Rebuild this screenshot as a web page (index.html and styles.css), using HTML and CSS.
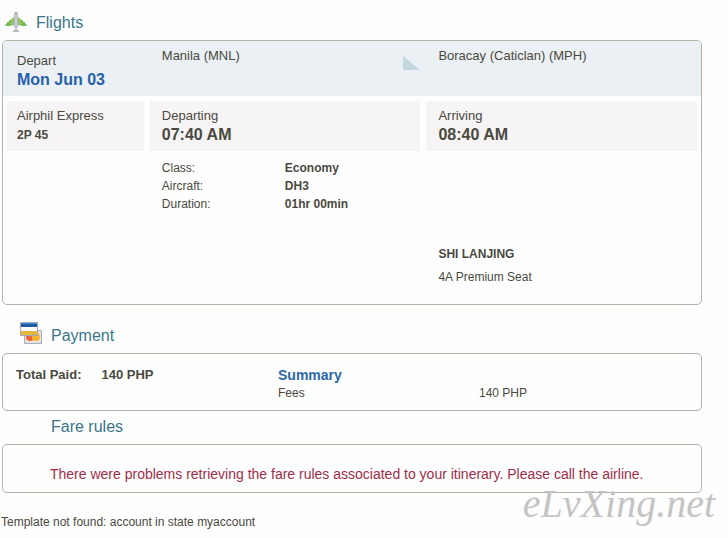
FILE: index.html
```html
<!DOCTYPE html>
<html lang="en">
<head>
<meta charset="utf-8">
<title>Itinerary</title>
<link rel="stylesheet" href="styles.css">
</head>
<body>
<main class="page">
  <section class="flights">
    <h2 class="heading heading-flights">
      <svg class="icon-plane" width="22" height="22" viewBox="0 0 22 22" aria-hidden="true">
        <path d="M9 5 5 8 2 11 0 14h5l4-1zM13 5l4 3 3 3 2 3h-5l-4-1z" fill="#8cc665"/>
        <path d="M0 14l3-4 2 3zM22 14l-3-4-2 3z" fill="#6cb04f"/>
        <path d="M5 8v3M17 8v3" stroke="#66a850"/>
        <path d="M9 3q0-3 2-3t2 3v11l-1 3 2 2v1H8v-1l2-2-1-3z" fill="#b5b8bd"/>
        <path d="M11 2v16" stroke="#dfe1e4"/>
        <path d="M10 1h2" stroke="#868b91"/>
      </svg>
      <span>Flights</span>
    </h2>
    <div class="panel">
      <div class="columns route">
        <div class="cell depart">
          <div>Depart</div>
          <strong class="date">Mon Jun 03</strong>
        </div>
        <div class="cell origin">
          <span>Manila (MNL)</span>
          <svg class="arrow" width="17" height="14" viewBox="0 0 17 14" aria-hidden="true"><path d="M0 0v14h17z" fill="#c5d7de"/></svg>
        </div>
        <div class="cell">Boracay (Caticlan) (MPH)</div>
      </div>
      <div class="columns times">
        <div class="cell"><div>Airphil Express</div><strong class="number">2P 45</strong></div>
        <div class="cell"><div>Departing</div><strong class="time">07:40 AM</strong></div>
        <div class="cell"><div>Arriving</div><strong class="time">08:40 AM</strong></div>
      </div>
      <div class="columns details">
        <dl class="specs">
          <dt>Class:</dt><dd>Economy</dd>
          <dt>Aircraft:</dt><dd>DH3</dd>
          <dt>Duration:</dt><dd>01hr 00min</dd>
        </dl>
        <div class="passenger">
          <strong>SHI LANJING</strong>
          <span>4A Premium Seat</span>
        </div>
      </div>
    </div>
  </section>

  <section>
    <h2 class="heading heading-payment">
      <svg class="icon-cards" width="22" height="22" viewBox="0 0 22 22" aria-hidden="true">
        <path d="M4.500 8.500h17v13h-17z" fill="#e7e3e5" stroke="#a9adb8"/>
        <path d="M6 10h14v9H6z" fill="#f6e3b0"/>
        <circle cx="10" cy="15" r="4" fill="#ea6840"/>
        <circle cx="16" cy="15" r="4" fill="#f4b335"/>
        <path d="M.5.5h17v13H.5z" fill="#fff" stroke="#a0a9b8"/>
        <path d="M1 1h16v4H1z" fill="#1f5ca5"/>
        <path d="M1 1h16v1H1z" fill="#3c91cd"/>
        <path d="M1 9h16v4H1z" fill="#e8b63c"/>
      </svg>
      <span>Payment</span>
    </h2>
    <div class="panel payment">
      <div class="total"><span>Total Paid:</span><span>140 PHP</span></div>
      <div class="summary">
        <h3>Summary</h3>
        <div class="fee"><span>Fees</span><span>140 PHP</span></div>
      </div>
    </div>
  </section>

  <section>
    <h2 class="heading heading-rules">Fare rules</h2>
    <div class="panel rules">
      <p>There were problems retrieving the fare rules associated to your itinerary. Please call the airline.</p>
      <span class="watermark">eLvXing.net</span>
    </div>
  </section>
  <p class="status">Template not found: account in state myaccount</p>
</main>
</body>
</html>
```
FILE: styles.css
```css
* { box-sizing: border-box; }

body {
  margin: 0;
  background: #fefefe;
  color: #4a4940;
  font: 13px/18px "Liberation Sans", Arial, sans-serif;
}

h2, h3, p, dl, dd { margin: 0; }

.page { padding: 12px 26px 8px 2px; }

.heading {
  display: flex;
  color: #397588;
  font-size: 16px;
  font-weight: normal;
  line-height: 22px;
}

.heading-flights { gap: 9px; padding: 0 0 6px 3px; }
.heading-payment { gap: 9px; padding: 17px 0 6px 18px; }
.heading-payment span { padding-top: 3px; }
.heading-rules { padding: 5px 0 6px 49px; }

.panel {
  border: 1px solid #b2b2a6;
  border-radius: 5px;
  background: #fefefe;
}

.columns {
  display: grid;
  grid-template-columns: 137fr 271fr 271fr;
  column-gap: 6px;
  padding: 0 4px;
}

.cell { padding: 6px 12px 0; }
.cell:first-child { padding-left: 10px; }

.route {
  min-height: 55px;
  border-radius: 4px 4px 0 0;
  background: #eaf0f3;
}

.route .depart { padding-top: 11px; }
.date { display: block; color: #2760a9; font-size: 16px; line-height: 20px; }
.origin { display: flex; justify-content: space-between; padding-right: 0; }
.arrow { margin-top: 9px; }

.times { padding-top: 5px; }
.times .cell { min-height: 50px; background: #f6f4f5; }
.times strong { display: block; line-height: 20px; }
.number { font-size: 12px; }
.time { font-size: 16px; }

.details { padding-top: 8px; padding-bottom: 18px; font-size: 12px; }

.specs {
  display: grid;
  grid-template-columns: 123px 1fr;
  grid-column: 2;
  align-content: start;
  padding-left: 12px;
}

.specs dd { font-weight: bold; }

.passenger {
  display: flex;
  flex-direction: column;
  gap: 5px;
  padding: 86px 12px 0;
}

.payment {
  display: grid;
  grid-template-columns: 262fr 410fr;
  min-height: 58px;
  padding: 12px 13px 0;
}

.total { display: flex; gap: 20px; font-weight: bold; }
.summary h3 { color: #2b67a8; font-size: 14px; line-height: 18px; }
.fee { display: grid; grid-template-columns: 201fr 209fr; font-size: 12px; }

.rules {
  position: relative;
  padding: 20px 0 9px 47px;
  color: #a02d48;
  font-size: 14px;
}

.watermark {
  position: absolute;
  right: -14px;
  bottom: -36px;
  color: #c4c4c4;
  font: italic 40px/48px "Liberation Serif", serif;
}

.status { margin: 20px 0 0 -1px; font-size: 12px; }
```
